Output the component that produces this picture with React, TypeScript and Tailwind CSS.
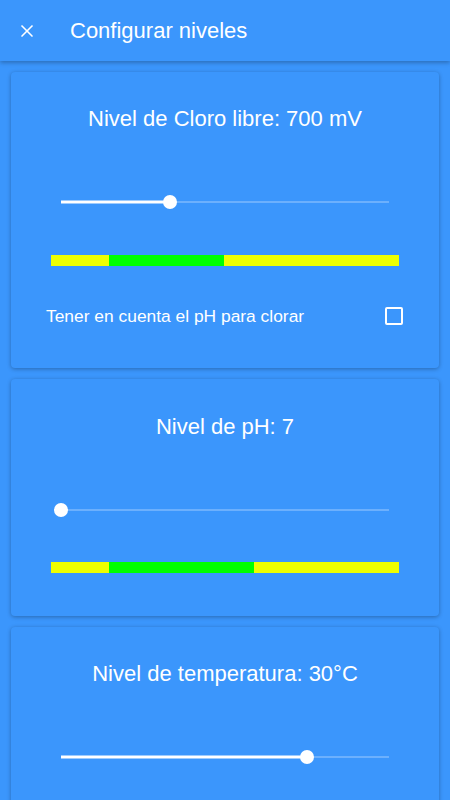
import { X } from "lucide-react";

interface Segment {
  color: string;
  width: number;
}

const Slider = ({ value }: { value: number }) => {
  return (
    <div className="relative mx-[50px] h-7">
      <div className="absolute left-0 right-0 top-1/2 h-[2px] -translate-y-1/2 bg-white/25" />
      <div
        className="absolute left-0 top-1/2 h-[3px] -translate-y-1/2 bg-white"
        style={{ width: `${value * 100}%` }}
      />
      <div
        className="absolute top-1/2 h-[14px] w-[14px] -translate-x-1/2 -translate-y-1/2 rounded-full bg-white"
        style={{ left: `${value * 100}%` }}
      />
    </div>
  );
};

const LevelBar = ({ segments }: { segments: Segment[] }) => {
  return (
    <div className="mx-10 flex h-[11px]">
      {segments.map((s, i) => (
        <div key={i} style={{ width: `${s.width}px`, backgroundColor: s.color }} />
      ))}
    </div>
  );
};

const YELLOW = "#eeff00";
const GREEN = "#00ff00";

const App = () => {
  return (
    <div
      className="min-h-[800px] w-[450px] bg-[#3b96fc] text-white"
      style={{ fontFamily: "'Liberation Sans', Arial, sans-serif" }}
    >
      {/* Toolbar */}
      <div className="relative z-10 flex h-[61px] items-center bg-[#3b96fc] shadow-[0_2px_4px_rgba(0,0,0,0.25)]">
        <div className="flex w-[70px] items-center pl-[17px]">
          <X size={20} strokeWidth={2} />
        </div>
        <h1 className="text-[22px] leading-7">Configurar niveles</h1>
      </div>

      <div className="flex flex-col gap-[11px] px-[11px] pt-[11px]">
        {/* Cloro */}
        <div className="h-[296px] rounded bg-[#3b96fc] pt-[35px] shadow-[0_1px_4px_rgba(0,0,0,0.3)]">
          <h2 className="h-6 text-center text-[22px] leading-6">Nivel de Cloro libre: 700 mV</h2>
          <div className="mt-[57px]">
            <Slider value={0.333} />
          </div>
          <div className="mt-[39px]">
            <LevelBar
              segments={[
                { color: YELLOW, width: 58 },
                { color: GREEN, width: 115 },
                { color: YELLOW, width: 175 },
              ]}
            />
          </div>
          <div className="mt-[38px] flex h-6 items-center justify-between pl-[35px] pr-[36px]">
            <span className="text-[17.4px]">Tener en cuenta el pH para clorar</span>
            <div className="h-[18px] w-[18px] rounded-[2px] border-2 border-white" />
          </div>
        </div>

        {/* pH */}
        <div className="h-[237px] rounded bg-[#3b96fc] pt-[36px] shadow-[0_1px_4px_rgba(0,0,0,0.3)]">
          <h2 className="h-6 text-center text-[22px] leading-6">Nivel de pH: 7</h2>
          <div className="mt-[57px]">
            <Slider value={0} />
          </div>
          <div className="mt-[38px]">
            <LevelBar
              segments={[
                { color: YELLOW, width: 58 },
                { color: GREEN, width: 145 },
                { color: YELLOW, width: 145 },
              ]}
            />
          </div>
        </div>

        {/* Temperatura */}
        <div className="h-[237px] rounded bg-[#3b96fc] pt-[35px] shadow-[0_1px_4px_rgba(0,0,0,0.3)]">
          <h2 className="h-6 text-center text-[22px] leading-6">Nivel de temperatura: 30°C</h2>
          <div className="mt-[57px]">
            <Slider value={0.749} />
          </div>
        </div>
      </div>
    </div>
  );
};

export default App;
